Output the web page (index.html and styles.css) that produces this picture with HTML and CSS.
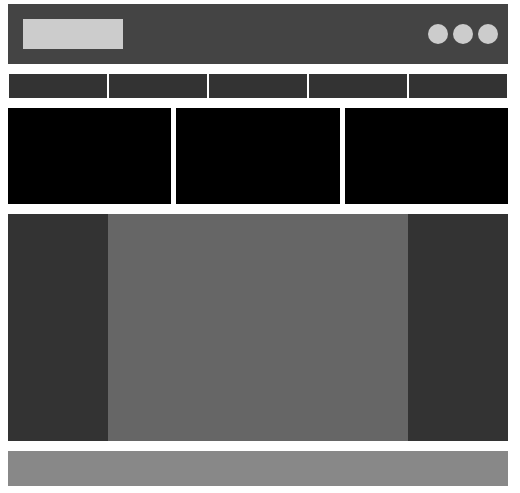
FILE: index.html
```html
<!DOCTYPE html>
<html lang="en">
<head>
  <meta charset="UTF-8" />
  <title>Layout</title>
  <link rel="stylesheet" href="styles.css">
</head>
<body>

  <header class="site-header">
    <div class="logo"></div>
    <div class="header-dots">
      <span class="dot"></span>
      <span class="dot"></span>
      <span class="dot"></span>
    </div>
  </header>

  <nav class="main-nav">
    <div class="nav-item"></div>
    <div class="nav-item"></div>
    <div class="nav-item"></div>
    <div class="nav-item"></div>
    <div class="nav-item"></div>
  </nav>

  <section class="cards">
    <div class="card"></div>
    <div class="card"></div>
    <div class="card"></div>
  </section>

  <div class="body-row">
    <aside class="side side-left"></aside>
    <main class="content"></main>
    <aside class="side side-right"></aside>
  </div>

  <footer class="site-footer"></footer>

</body>
</html>
```

FILE: styles.css
```css
body {
  margin: 4px 8px;
  width: 500px;
  display: flex;
  flex-direction: column;
  gap: 10px;
  background: #fff;
  font-family: "Liberation Sans", sans-serif;
}

.site-header {
  height: 60px;
  background: #444;
  display: flex;
  align-items: center;
  justify-content: space-between;
  padding: 0 10px 0 15px;
}

.logo {
  width: 100px;
  height: 30px;
  background: #ccc;
}

.header-dots {
  display: flex;
  gap: 5px;
}

.dot {
  width: 20px;
  height: 20px;
  border-radius: 50%;
  background: #ccc;
}

.main-nav {
  display: flex;
  height: 24px;
}

.nav-item {
  flex: 1;
  margin: 0 1px;
  background: #333;
}

.cards {
  display: grid;
  grid-template-columns: repeat(3, 1fr);
  gap: 5px;
  height: 96px;
}

.card {
  background: #000;
}

.body-row {
  display: flex;
  height: 227px;
}

.side {
  width: 100px;
  background: #333;
}

.content {
  flex: 1;
  background: #666;
}

.site-footer {
  height: 35px;
  background: #888;
}
```
